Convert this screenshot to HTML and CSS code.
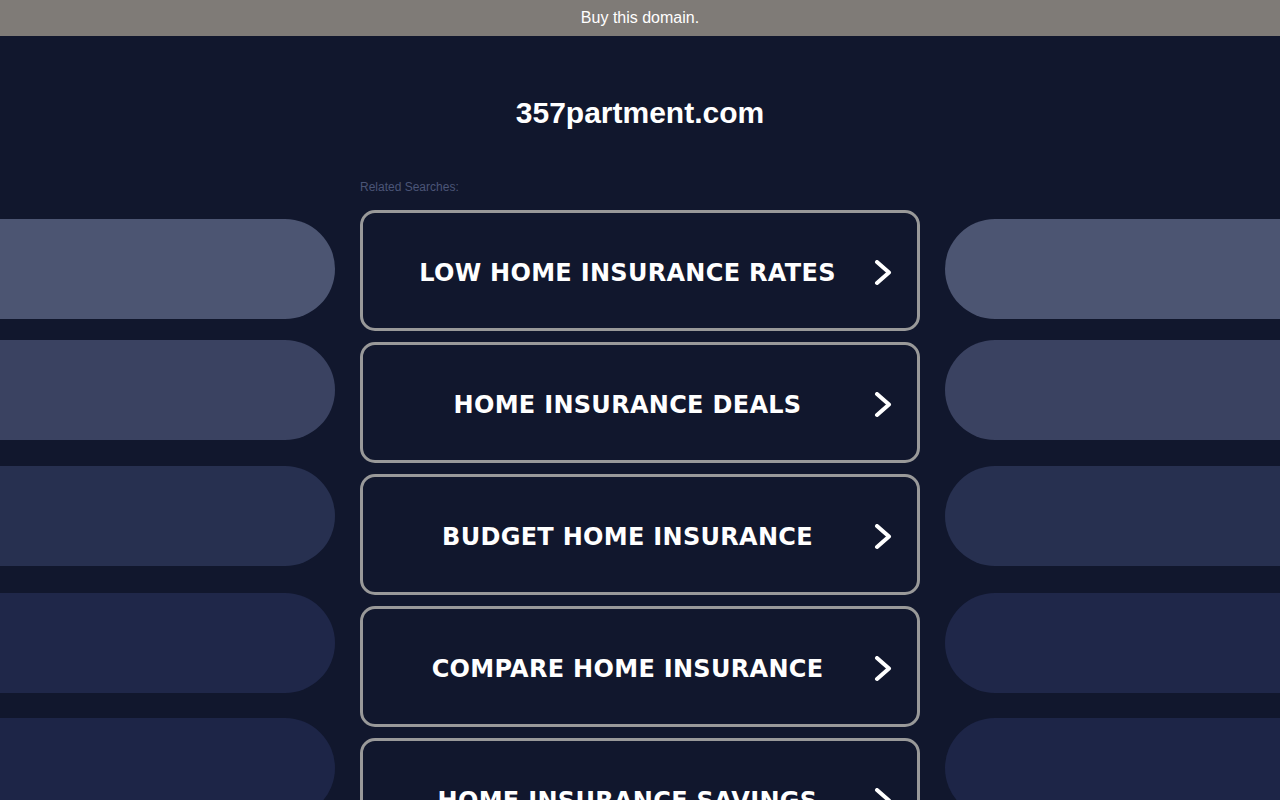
FILE: index.html
```html
<!DOCTYPE html>
<html lang="en">
<head>
<meta charset="utf-8">
<title>357partment.com</title>
<link rel="stylesheet" href="styles.css">
</head>
<body>
<div class="topbar">Buy this domain.</div>
<h1 class="domain">357partment.com</h1>
<div class="main">
  <div class="side side-left">
    <div class="pill p1"></div>
    <div class="pill p2"></div>
    <div class="pill p3"></div>
    <div class="pill p4"></div>
    <div class="pill p5"></div>
  </div>
  <div class="center">
    <div class="related">Related Searches:</div>
    <a class="btn" href="#"><span class="label">LOW HOME INSURANCE RATES</span><svg class="chev" viewBox="0 0 18 26" width="18" height="26"><polyline points="3,2 15,12.5 3,23" /></svg></a>
    <a class="btn" href="#"><span class="label">HOME INSURANCE DEALS</span><svg class="chev" viewBox="0 0 18 26" width="18" height="26"><polyline points="3,2 15,12.5 3,23" /></svg></a>
    <a class="btn" href="#"><span class="label">BUDGET HOME INSURANCE</span><svg class="chev" viewBox="0 0 18 26" width="18" height="26"><polyline points="3,2 15,12.5 3,23" /></svg></a>
    <a class="btn" href="#"><span class="label">COMPARE HOME INSURANCE</span><svg class="chev" viewBox="0 0 18 26" width="18" height="26"><polyline points="3,2 15,12.5 3,23" /></svg></a>
    <a class="btn" href="#"><span class="label">HOME INSURANCE SAVINGS</span><svg class="chev" viewBox="0 0 18 26" width="18" height="26"><polyline points="3,2 15,12.5 3,23" /></svg></a>
  </div>
  <div class="side side-right">
    <div class="pill p1"></div>
    <div class="pill p2"></div>
    <div class="pill p3"></div>
    <div class="pill p4"></div>
    <div class="pill p5"></div>
  </div>
</div>
</body>
</html>
```

FILE: styles.css
```css
html, body {
  margin: 0;
  padding: 0;
}
body {
  background: #11172d;
  font-family: "Liberation Sans", Arial, sans-serif;
  color: #fff;
  overflow: hidden;
  height: 800px;
}
.topbar {
  height: 36px;
  line-height: 36px;
  background: #7f7b77;
  color: #fff;
  font-size: 16px;
  text-align: center;
}
.domain {
  margin: 59px 0 49px;
  font-size: 30px;
  line-height: 36px;
  font-weight: bold;
  text-align: center;
}
.main {
  display: grid;
  grid-template-columns: 335px 560px 335px;
  column-gap: 25px;
}
.side {
  padding-top: 39px;
  display: flex;
  flex-direction: column;
}
.pill {
  height: 100px;
  flex: none;
}
.side-left .pill { border-radius: 0 50px 50px 0; }
.side-right .pill { border-radius: 50px 0 0 50px; }
.p1 { background: #4c5572; }
.p2 { background: #3a4261; margin-top: 21px; }
.p3 { background: #273050; margin-top: 26px; }
.p4 { background: #1f2749; margin-top: 27px; }
.p5 { background: #1d2547; margin-top: 25px; }
.related {
  font-size: 12px;
  line-height: 15px;
  color: #4b5577;
  margin-bottom: 15px;
}
.btn {
  display: flex;
  align-items: center;
  box-sizing: border-box;
  height: 121px;
  margin-bottom: 11px;
  border: 3px solid #999999;
  border-radius: 15px;
  padding: 4px 25px 0 20px;
  text-decoration: none;
  color: #fff;
}
.label {
  flex: 1;
  text-align: center;
  font-family: "DejaVu Sans", Verdana, sans-serif;
  font-weight: bold;
  font-size: 24px;
  letter-spacing: 0.3px;
  margin-right: 2px;
}
.chev {
  flex: none;
}
.chev polyline {
  fill: none;
  stroke: #fff;
  stroke-width: 4;
  stroke-linecap: round;
  stroke-linejoin: round;
}
```
